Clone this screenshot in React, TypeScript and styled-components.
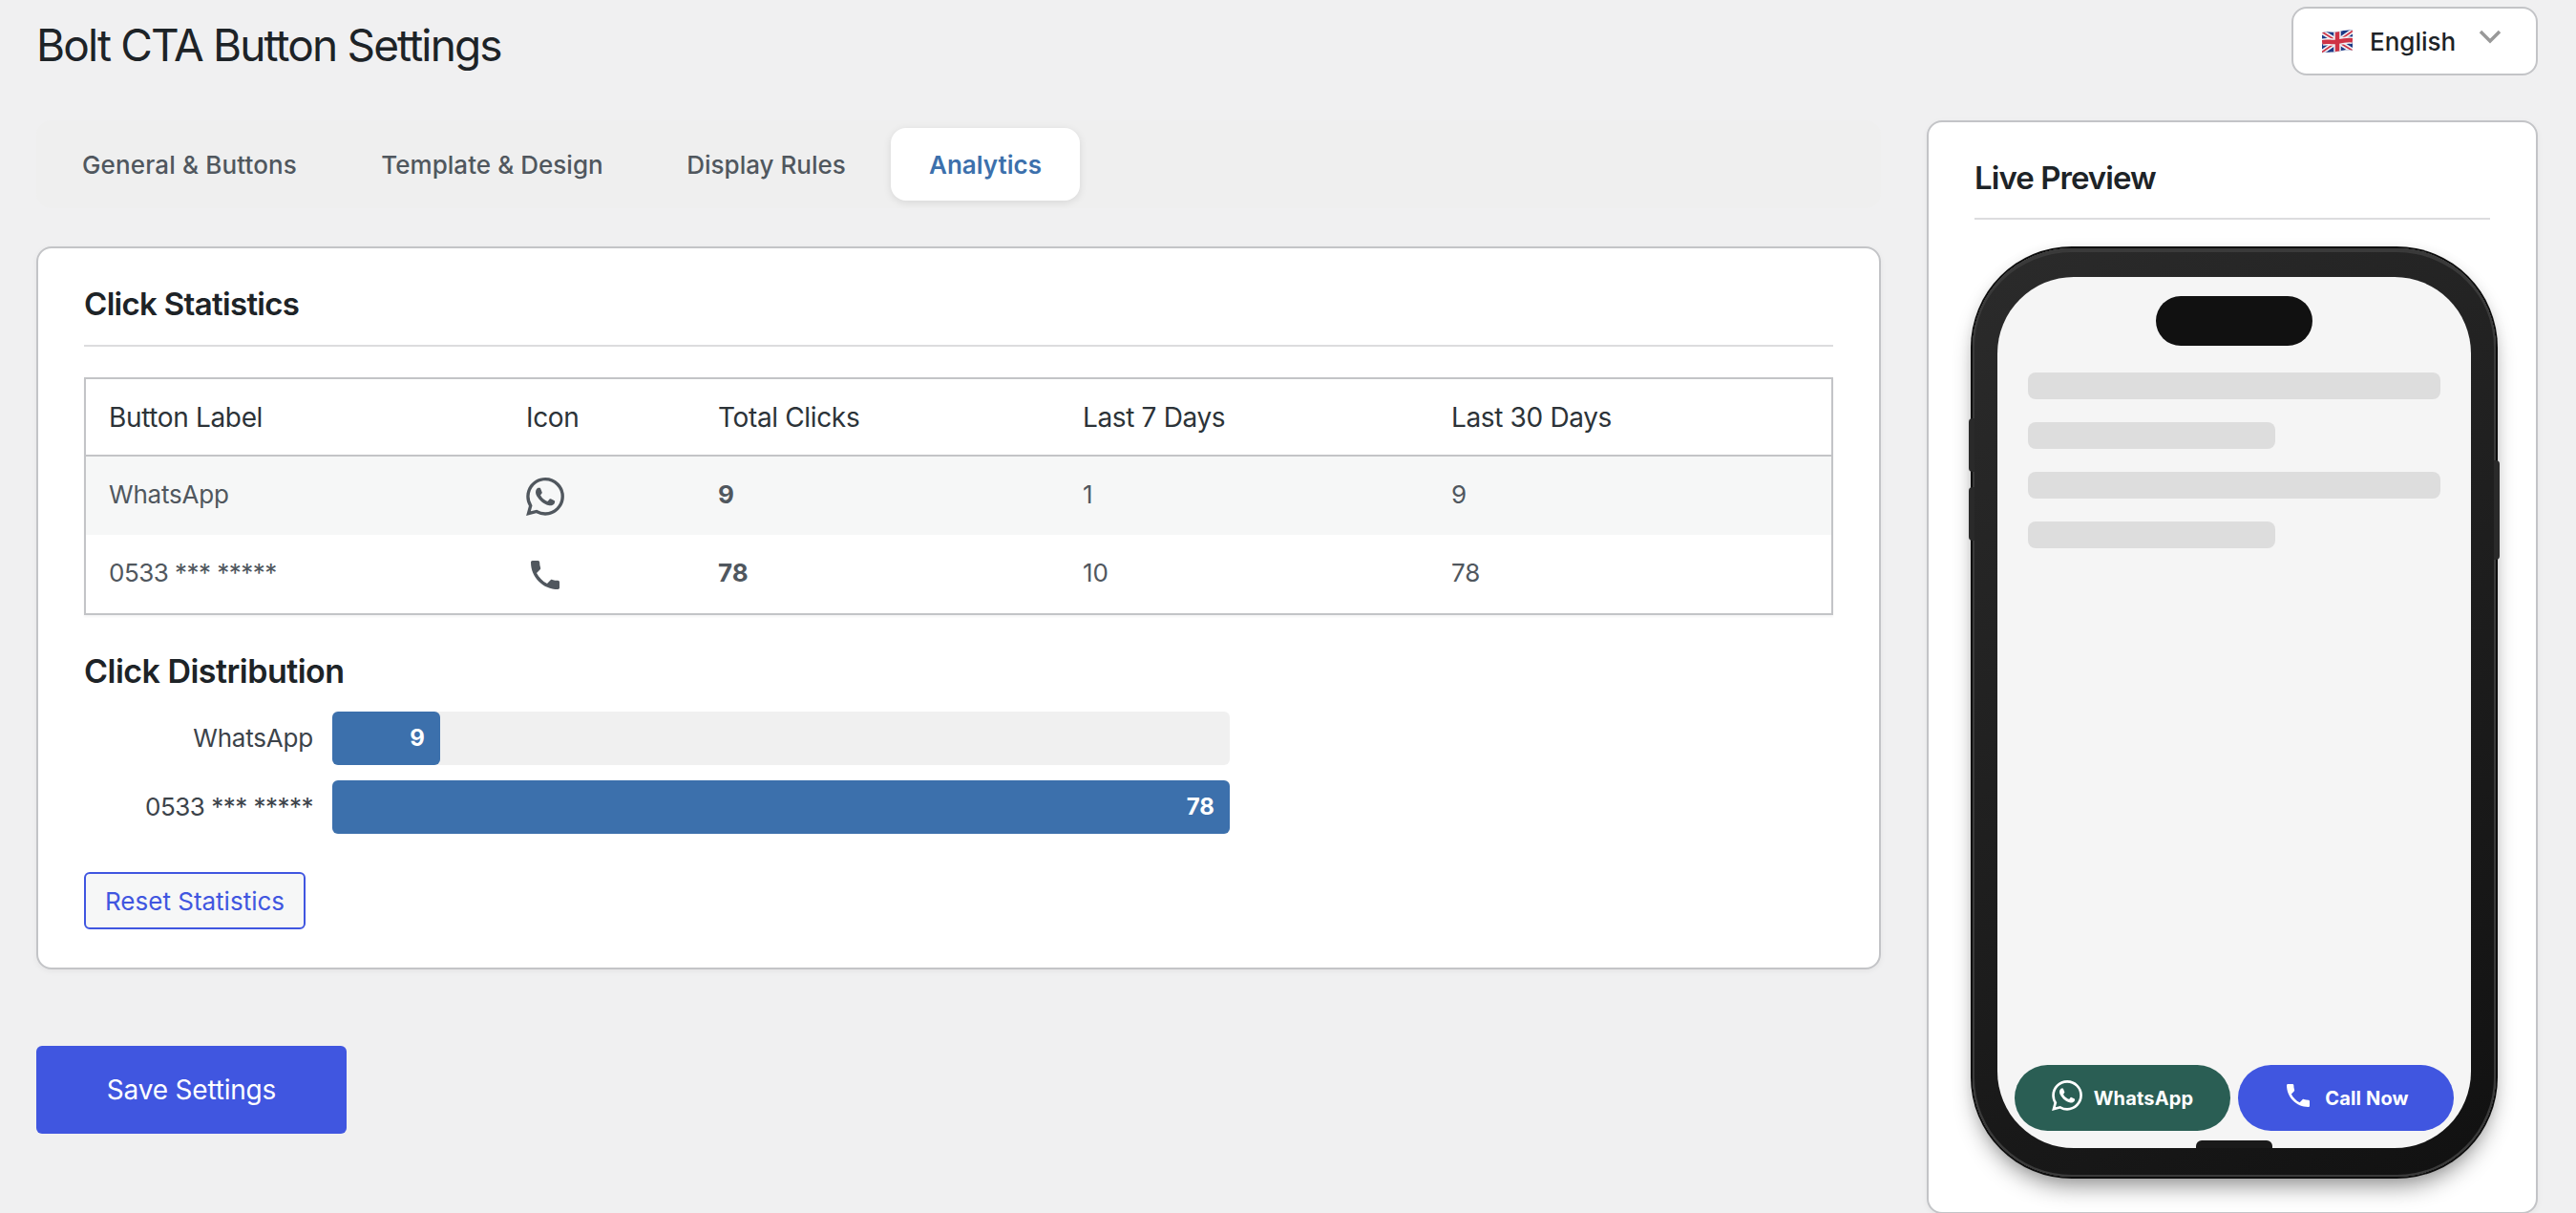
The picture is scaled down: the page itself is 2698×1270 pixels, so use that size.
import React from "react";
import styled, { createGlobalStyle } from "styled-components";
import { SiWhatsapp } from "react-icons/si";
import { MdPhone } from "react-icons/md";

const c = {
  page: "#f0f0f1",
  ink: "#1d2327",
  body: "#50575e",
  line: "#c3c4c7",
  blue: "#3c70ac",
  primary: "#4056e0",
};

const GlobalStyle = createGlobalStyle`
  *, *::before, *::after { box-sizing: border-box; }
  body {
    margin: 0;
    background: ${c.page};
    color: ${c.body};
    font-family: Inter, "Liberation Sans", sans-serif;
    font-size: 26px;
  }
  h1, h2, h3 { margin: 0; }
  button { font-family: inherit; cursor: pointer; }
`;

const Page = styled.div`
  height: 1270px;
  overflow: hidden;
  padding: 7px 40px 0 38px;
`;

const Header = styled.header`
  display: flex;
  justify-content: space-between;
  align-items: flex-start;
  height: 72px;
  margin-bottom: 47px;
`;

const Title = styled.h1`
  margin-top: 4px;
  font-size: 46px;
  font-weight: 400;
  line-height: 72px;
  letter-spacing: -1.85px;
  color: ${c.ink};
`;

const LanguageSelect = styled.button`
  display: flex;
  align-items: center;
  width: 258px;
  height: 72px;
  padding: 0 36px 0 30px;
  background: #fff;
  border: 2px solid ${c.line};
  border-radius: 16px;
  font-size: 26px;
  font-weight: 500;
  color: ${c.ink};
`;

const LanguageName = styled.span`
  margin-left: 18px;
`;

const Chevron = styled.svg`
  margin-left: auto;
  margin-bottom: 9px;
`;

const Columns = styled.div`
  display: grid;
  grid-template-columns: 1932px 640px;
  column-gap: 48px;
  align-items: start;
`;

const Tabs = styled.nav`
  display: flex;
  gap: 8px;
  height: 92px;
  padding: 8px;
  margin-bottom: 40px;
  border-radius: 16px;
  background: #efefef;
`;

const Tab = styled.button<{ $active?: boolean; $width: number; $tracking?: number }>`
  width: ${(p) => p.$width}px;
  height: 76px;
  padding: 0;
  border: 0;
  border-radius: 16px;
  font-size: 26px;
  font-weight: ${(p) => (p.$active ? 600 : 500)};
  letter-spacing: ${(p) => p.$tracking ?? 0}px;
  white-space: nowrap;
  color: ${(p) => (p.$active ? c.blue : c.body)};
  background: ${(p) => (p.$active ? "#fff" : "transparent")};
  box-shadow: ${(p) => (p.$active ? "0 2px 8px rgba(0, 0, 0, 0.1)" : "none")};
`;

const Card = styled.section`
  background: #fff;
  border: 2px solid ${c.line};
  border-radius: 16px;
  box-shadow: 0 2px 6px rgba(0, 0, 0, 0.05);
`;

const StatsCard = styled(Card)`
  padding: 39px 48px 40px;
`;

const PreviewCard = styled(Card)`
  height: 1145px;
  padding: 39px 48px 0;
`;

const SectionTitle = styled.h2<{ $gap: number; $pad: number; $tracking: number }>`
  padding-bottom: ${(p) => p.$pad}px;
  margin-bottom: ${(p) => p.$gap}px;
  border-bottom: 2px solid #dcdcde;
  font-size: 33px;
  font-weight: 600;
  line-height: 39px;
  letter-spacing: ${(p) => p.$tracking}px;
  color: ${c.ink};
`;

const Table = styled.table`
  width: 1832px;
  table-layout: fixed;
  border-collapse: separate;
  border-spacing: 0;
  border: 2px solid ${c.line};
  box-shadow: 0 2px 2px rgba(0, 0, 0, 0.04);
`;

const HeadCell = styled.th`
  height: 81px;
  padding: 0 24px;
  border-bottom: 2px solid ${c.line};
  font-size: 28px;
  font-weight: 400;
  letter-spacing: -0.35px;
  text-align: left;
  color: #2c3338;
`;

const BodyRow = styled.tr<{ $striped?: boolean }>`
  background: ${(p) => (p.$striped ? "#f6f7f7" : "#fff")};
`;

const Cell = styled.td<{ $strong?: boolean; $tracking?: number }>`
  height: 82px;
  padding: 0 24px 2px;
  line-height: 36px;
  font-weight: ${(p) => (p.$strong ? 700 : 400)};
  letter-spacing: ${(p) => p.$tracking ?? 0}px;
`;

const IconCell = styled.td`
  padding: 2px 24px 0;
  font-size: 40px;
  line-height: 0;
`;

const ChartTitle = styled.h3`
  margin: 39px 0 22px;
  font-size: 34px;
  font-weight: 600;
  line-height: 40px;
  letter-spacing: -0.52px;
  color: ${c.ink};
`;

const Chart = styled.div`
  display: flex;
  flex-direction: column;
  gap: 16px;
`;

const BarRow = styled.div`
  display: grid;
  grid-template-columns: 240px 940px;
  column-gap: 20px;
  align-items: center;
`;

const BarLabel = styled.span<{ $tracking: number }>`
  line-height: 56px;
  text-align: right;
  letter-spacing: ${(p) => p.$tracking}px;
  color: #3c434a;
`;

const Track = styled.div`
  height: 56px;
  border-radius: 6px;
  background: #f0f0f0;
`;

const Bar = styled.div`
  display: flex;
  align-items: center;
  justify-content: flex-end;
  height: 100%;
  padding: 0 16px 1px 0;
  border-radius: 6px;
  background: ${c.blue};
  color: #fff;
  font-size: 24px;
  font-weight: 700;
`;

const ResetButton = styled.button`
  display: block;
  width: 232px;
  height: 60px;
  margin-top: 40px;
  padding: 0;
  border: 2px solid ${c.primary};
  border-radius: 6px;
  background: #f6f7f7;
  font-size: 26px;
  color: ${c.primary};
`;

const SaveButton = styled.button`
  display: block;
  width: 325px;
  height: 92px;
  margin-top: 80px;
  padding: 0;
  border: 0;
  border-radius: 6px;
  background: ${c.primary};
  font-size: 28px;
  letter-spacing: -0.2px;
  color: #fff;
`;

const Phone = styled.div`
  position: relative;
  width: 548px;
  height: 972px;
  margin-left: -2px;
  padding: 30px 26px;
  border-radius: 104px;
  background: linear-gradient(145deg, #2b2b2b, #111);
  box-shadow:
    inset 0 0 0 2px #3a3a3a,
    inset 0 4px 0 #3a3a3a,
    0 0 0 2px #0d0d0d,
    0 0 14px rgba(0, 0, 0, 0.08),
    0 14px 24px -5px rgba(0, 0, 0, 0.44);
`;

const SideKey = styled.span<{ $side: "left" | "right"; $top: number; $height: number }>`
  position: absolute;
  ${(p) => p.$side}: -4px;
  top: ${(p) => p.$top}px;
  width: 6px;
  height: ${(p) => p.$height}px;
  border-radius: ${(p) => (p.$side === "left" ? "4px 0 0 4px" : "0 4px 4px 0")};
  background: #2a2a2a;
`;

const Screen = styled.div`
  position: relative;
  display: flex;
  flex-direction: column;
  height: 912px;
  padding: 20px 18px 18px;
  border-radius: 80px;
  overflow: hidden;
  background: #f5f5f5;
`;

const Island = styled.div`
  align-self: center;
  width: 164px;
  height: 52px;
  border-radius: 26px;
  background: #111;
`;

const Skeleton = styled.div`
  display: flex;
  flex-direction: column;
  gap: 24px;
  padding: 28px 14px 0;
`;

const SkeletonLine = styled.div<{ $short?: boolean }>`
  width: ${(p) => (p.$short ? "60%" : "100%")};
  height: 28px;
  border-radius: 8px;
  background: #ddd;
`;

const CallBar = styled.div`
  display: flex;
  gap: 8px;
  margin-top: auto;
`;

const CallButton = styled.div<{ $color: string }>`
  display: flex;
  align-items: center;
  justify-content: center;
  gap: 12px;
  width: 226px;
  height: 69px;
  border-radius: 35px;
  background: ${(p) => p.$color};
  color: #fff;
  font-size: 20px;
  font-weight: 700;
  letter-spacing: 0.15px;

  svg {
    font-size: 32px;
    margin-bottom: 5px;
  }
`;

const HomeBar = styled.span`
  position: absolute;
  left: 208px;
  bottom: 0;
  width: 80px;
  height: 8px;
  border-radius: 6px 6px 0 0;
  background: #1a1a1a;
`;

const Flag = () => (
  <svg width="32" height="25" viewBox="0 0 32 25">
    <defs>
      <clipPath id="flag">
        <path d="M0 3.400C5 .9 9.500 3.900 16 2.400S27 0 32 .8V21.600C27 20.800 22.500 21.300 16 22.800S5 23.200 0 24.200Z" />
      </clipPath>
    </defs>
    <g clipPath="url(#flag)">
      <rect width="32" height="25" fill="#1d3a86" />
      <path d="M0 2.500 32 22M0 23.500 32 1.500" stroke="#f1f1f4" strokeWidth="5" />
      <path d="M0 2.500 32 22M0 23.500 32 1.500" stroke="#cf3345" strokeWidth="1.700" />
      <path d="M16 0V25M0 13.300C5 11.500 10 14 16 12.700S27 10.500 32 11.300" stroke="#f1f1f4" strokeWidth="7.500" fill="none" />
      <path d="M16 0V25M0 13.300C5 11.500 10 14 16 12.700S27 10.500 32 11.300" stroke="#cf3345" strokeWidth="4.500" fill="none" />
    </g>
  </svg>
);

const stats = [
  { label: "WhatsApp", tracking: -0.2, Icon: SiWhatsapp, total: 9, week: 1, month: 9 },
  { label: "0533 *** *****", tracking: -0.52, Icon: MdPhone, total: 78, week: 10, month: 78 },
];
const most = Math.max(...stats.map((s) => s.total));

const tabs = [
  { label: "General & Buttons", width: 305, tracking: 0.14 },
  { label: "Template & Design", width: 313, tracking: 0.05 },
  { label: "Display Rules", width: 245 },
  { label: "Analytics", width: 198, active: true },
];

export default function App() {
  return (
    <Page>
      <GlobalStyle />
      <Header>
        <Title>Bolt CTA Button Settings</Title>
        <LanguageSelect>
          <Flag />
          <LanguageName>English</LanguageName>
          <Chevron width="24" height="15" viewBox="0 0 24 15" fill="none">
            <path d="M2 2 12 12 22 2" stroke="#999" strokeWidth="3.500" />
          </Chevron>
        </LanguageSelect>
      </Header>
      <Columns>
        <main>
          <Tabs>
            {tabs.map((t) => (
              <Tab key={t.label} $width={t.width} $tracking={t.tracking} $active={t.active}>
                {t.label}
              </Tab>
            ))}
          </Tabs>
          <StatsCard>
            <SectionTitle $pad={23} $gap={32} $tracking={-0.68}>
              Click Statistics
            </SectionTitle>
            <Table>
              <colgroup>
                <col style={{ width: 437 }} />
                <col style={{ width: 201 }} />
                <col style={{ width: 382 }} />
                <col style={{ width: 386 }} />
                <col />
              </colgroup>
              <thead>
                <tr>
                  <HeadCell>Button Label</HeadCell>
                  <HeadCell>Icon</HeadCell>
                  <HeadCell>Total Clicks</HeadCell>
                  <HeadCell>Last 7 Days</HeadCell>
                  <HeadCell>Last 30 Days</HeadCell>
                </tr>
              </thead>
              <tbody>
                {stats.map(({ label, tracking, Icon, total, week, month }, i) => (
                  <BodyRow key={label} $striped={i % 2 === 0}>
                    <Cell $tracking={tracking}>{label}</Cell>
                    <IconCell>
                      <Icon />
                    </IconCell>
                    <Cell $strong>{total}</Cell>
                    <Cell>{week}</Cell>
                    <Cell>{month}</Cell>
                  </BodyRow>
                ))}
              </tbody>
            </Table>
            <ChartTitle>Click Distribution</ChartTitle>
            <Chart>
              {stats.map(({ label, tracking, total }) => (
                <BarRow key={label}>
                  <BarLabel $tracking={tracking}>{label}</BarLabel>
                  <Track>
                    <Bar style={{ width: `${Math.round((total / most) * 100)}%` }}>{total}</Bar>
                  </Track>
                </BarRow>
              ))}
            </Chart>
            <ResetButton>Reset Statistics</ResetButton>
          </StatsCard>
          <SaveButton>Save Settings</SaveButton>
        </main>
        <PreviewCard>
          <SectionTitle $pad={22} $gap={30} $tracking={-0.95}>
            Live Preview
          </SectionTitle>
          <Phone>
            <SideKey $side="left" $top={178} $height={56} />
            <SideKey $side="left" $top={250} $height={56} />
            <SideKey $side="right" $top={222} $height={104} />
            <Screen>
              <Island />
              <Skeleton>
                <SkeletonLine />
                <SkeletonLine $short />
                <SkeletonLine />
                <SkeletonLine $short />
              </Skeleton>
              <CallBar>
                <CallButton $color="#2a5e54">
                  <SiWhatsapp />
                  WhatsApp
                </CallButton>
                <CallButton $color={c.primary}>
                  <MdPhone />
                  Call Now
                </CallButton>
              </CallBar>
              <HomeBar />
            </Screen>
          </Phone>
        </PreviewCard>
      </Columns>
    </Page>
  );
}
